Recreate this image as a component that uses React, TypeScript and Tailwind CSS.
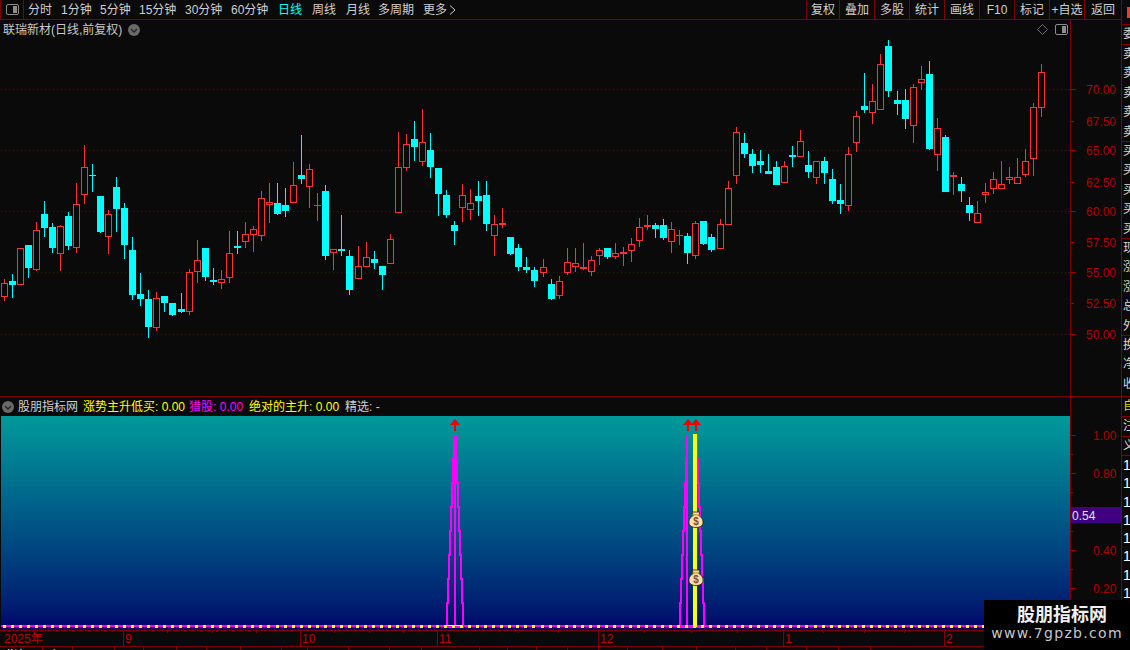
const UI_FONT = { fontFamily: '"Liberation Sans","Noto Sans CJK SC",sans-serif' };

// [kind, centreX, wickTop, bodyTop, bodyBottom, wickBottom] measured off the chart, 3x units per segment
type Raw = [string, number, number, number, number, number];

const segments: { x0: number; y0: number; items: Raw[] }[] = [
  {
    x0: 0,
    y0: 130,
    items: [
      ["r", 13, 447, 460, 502, 512], ["c", 37, 432, 453, 465, 503], ["r", 61, 355, 355, 466, 466], ["c", 85, 345, 345, 414, 443],
      ["r", 109, 277, 301, 421, 422], ["c", 133, 213, 252, 294, 320], ["c", 157, 279, 291, 354, 368], ["r", 181, 285, 289, 373, 422],
      ["c", 205, 247, 258, 348, 360], ["r", 229, 160, 223, 355, 368], ["r", 253, 45, 112, 196, 221], ["c", 277, 102, 135, 138, 185],
      ["c", 301, 198, 198, 306, 309], ["r", 325, 240, 253, 322, 371], ["c", 349, 141, 171, 237, 305], ["c", 373, 220, 234, 345, 386],
      ["c", 397, 321, 360, 495, 509], ["c", 421, 429, 492, 507, 527], ["c", 445, 480, 507, 591, 623], ["r", 469, 487, 505, 593, 602],
      ["c", 493, 498, 498, 519, 545], ["c", 517, 519, 519, 555, 557], ["c", 544, 489, 537, 546, 548], ["r", 568, 418, 427, 547, 554],
      ["r", 592, 331, 391, 427, 458], ["c", 616, 354, 354, 441, 452], ["c", 640, 414, 450, 456, 464], ["r", 664, 420, 448, 460, 476],
      ["r", 688, 303, 370, 445, 458], ["c", 712, 303, 348, 354, 371], ["r", 736, 276, 313, 337, 353], ["r", 760, 289, 298, 314, 365],
      ["r", 784, 183, 205, 319, 332], ["r", 808, 160, 217, 226, 278],
    ],
  },
  {
    x0: 270,
    y0: 100,
    items: [
      ["c", 22, 250, 309, 342, 345], ["c", 46, 264, 315, 333, 350], ["r", 70, 186, 256, 308, 308], ["c", 94, 105, 225, 237, 252],
      ["r", 118, 192, 208, 262, 324], ["R", 142, 279, 315, 318, 362], ["c", 166, 255, 273, 468, 480], ["r", 190, 448, 448, 458, 510],
      ["c", 214, 345, 447, 453, 468], ["c", 238, 450, 468, 570, 585], ["r", 265, 438, 499, 536, 536], ["r", 289, 426, 472, 500, 500],
      ["c", 313, 453, 477, 489, 507], ["c", 337, 498, 498, 525, 570], ["r", 361, 402, 418, 491, 491], ["r", 385, 96, 202, 338, 338],
      ["r", 409, 102, 133, 203, 212], ["c", 433, 63, 117, 141, 183], ["r", 457, 27, 127, 185, 197], ["c", 481, 99, 150, 201, 234],
      ["c", 505, 204, 204, 282, 347], ["c", 529, 270, 285, 345, 353], ["c", 553, 363, 375, 393, 435], ["r", 577, 252, 286, 323, 365],
      ["r", 601, 267, 310, 329, 359], ["c", 625, 243, 288, 303, 347], ["c", 649, 243, 285, 372, 392], ["r", 673, 345, 373, 407, 467],
      ["r", 697, 324, 370, 376, 383], ["c", 721, 411, 411, 462, 465], ["c", 745, 432, 444, 501, 513], ["c", 769, 471, 501, 510, 519],
      ["c", 793, 501, 510, 543, 560],
    ],
  },
  {
    x0: 540,
    y0: 120,
    items: [
      ["r", 10, 417, 442, 458, 470], ["c", 34, 477, 492, 537, 540], ["r", 58, 468, 484, 527, 537], ["r", 82, 384, 427, 458, 465],
      ["r", 106, 384, 430, 440, 456], ["R", 130, 369, 442, 447, 450], ["r", 154, 408, 421, 455, 468], ["r", 178, 384, 391, 407, 435],
      ["c", 202, 384, 384, 411, 417], ["r", 226, 369, 400, 410, 417], ["R", 250, 381, 397, 402, 438], ["r", 274, 354, 373, 392, 426],
      ["r", 298, 294, 322, 362, 381], ["R", 322, 285, 316, 321, 330], ["c", 346, 309, 315, 327, 354], ["c", 370, 297, 315, 354, 360],
      ["r", 394, 306, 328, 365, 399], ["R", 418, 330, 345, 348, 375], ["c", 442, 339, 348, 399, 432], ["r", 466, 303, 310, 407, 417],
      ["c", 490, 303, 303, 372, 375], ["c", 514, 342, 351, 390, 396], ["r", 541, 297, 313, 386, 387], ["r", 565, 183, 205, 314, 315],
      ["r", 589, 21, 37, 167, 192], ["c", 613, 39, 69, 102, 114], ["c", 637, 87, 102, 138, 159], ["c", 661, 90, 123, 135, 159],
      ["c", 685, 102, 153, 162, 162], ["c", 709, 123, 141, 195, 195], ["r", 733, 123, 139, 188, 189], ["c", 757, 78, 105, 111, 141],
      ["r", 781, 30, 64, 110, 111],
    ],
  },
  {
    x0: 800,
    y0: 30,
    items: [
      ["c", 25, 363, 405, 426, 444], ["r", 49, 393, 394, 445, 462], ["c", 73, 381, 393, 429, 462], ["c", 97, 417, 447, 513, 522],
      ["c", 121, 462, 510, 522, 552], ["r", 145, 351, 373, 529, 543], ["r", 169, 243, 259, 338, 366], ["c", 193, 129, 228, 240, 249],
      ["r", 217, 162, 214, 250, 282], ["r", 241, 72, 103, 239, 240], ["c", 265, 30, 48, 183, 201], ["c", 292, 183, 210, 222, 255],
      ["c", 316, 177, 210, 267, 297], ["r", 340, 162, 172, 287, 339], ["r", 364, 108, 148, 158, 180], ["c", 388, 93, 132, 357, 360],
      ["r", 412, 264, 295, 374, 423], ["c", 436, 315, 321, 486, 486], ["R", 460, 426, 436, 441, 495], ["c", 484, 441, 462, 483, 516],
      ["c", 508, 501, 525, 549, 573], ["r", 532, 513, 550, 578, 579], ["r", 556, 459, 487, 494, 519], ["r", 580, 426, 448, 476, 492],
      ["r", 604, 393, 463, 476, 477], ["r", 628, 411, 442, 450, 462], ["r", 652, 384, 442, 461, 461], ["r", 676, 357, 394, 434, 441],
      ["r", 700, 219, 232, 388, 438], ["r", 724, 102, 127, 233, 261],
    ],
  },
];

function PanelIcon({ color = "#8c8c8c" }: { color?: string }) {
  return (
    <svg width="13" height="11" viewBox="0 0 13 11">
      <rect x="0.5" y="0.5" width="12" height="10" rx="1.5" fill="none" stroke={color} />
      <rect x="7" y="2" width="4" height="7" fill={color} />
    </svg>
  );
}

function ChevronBadge() {
  return (
    <svg width="12" height="12" viewBox="0 0 12 12">
      <circle cx="6" cy="6" r="6" fill="#6a6a6a" />
      <path d="M3 5 L6 8 L9 5" fill="none" stroke="#222" strokeWidth="1.3" />
    </svg>
  );
}

function CandleChart() {
  const red = "#ff3333";
  const cyan = "#00ffff";
  return (
    <svg width="1070" height="376" viewBox="0 20 1070 376" shapeRendering="crispEdges" className="block">
      {[89, 150, 211, 272, 334].map((y) => (
        <line key={y} x1="1" x2="1070" y1={y + 0.5} y2={y + 0.5} stroke="#6a0000" strokeDasharray="1 3" />
      ))}
      {segments.map((seg) =>
        seg.items.map(([kind, cx, hi, top, bot, lo]) => {
          const x = seg.x0 + Math.floor(cx / 3);
          const yHi = seg.y0 + Math.round(hi / 3);
          const yTop = seg.y0 + Math.round(top / 3);
          const yBot = seg.y0 + Math.round(bot / 3);
          const yLo = seg.y0 + Math.round(lo / 3);
          const color = kind === "c" ? cyan : red;
          return (
            <g key={`${seg.x0}-${cx}`}>
              <rect x={x} y={yHi} width="1" height={yLo - yHi} fill={color} />
              {kind === "r" ? (
                <rect x={x - 2.5} y={yTop + 0.5} width="6" height={yBot - yTop - 1} fill="#0a0a0a" stroke={color} />
              ) : (
                <rect x={x - 3} y={yTop} width="7" height={Math.max(yBot - yTop, 1)} fill={color} />
              )}
            </g>
          );
        }),
      )}
    </svg>
  );
}

function PriceAxis() {
  const labels = ["70.00", "67.50", "65.00", "62.50", "60.00", "57.50", "55.00", "52.50", "50.00"];
  const ys = [89, 121, 150, 182, 211, 242, 272, 303, 334];
  return (
    <svg width="50" height="376" viewBox="0 20 50 376" className="block" style={UI_FONT}>
      {labels.map((label, i) => (
        <g key={label}>
          <rect x="0" y={ys[i]} width={i % 2 === 0 ? 5 : 3} height="1" fill="#a00000" />
          <text x="15" y={ys[i] + 5} fontSize="12" fill="#b00000">
            {label}
          </text>
        </g>
      ))}
    </svg>
  );
}

function MoneyBag({ x, y }: { x: number; y: number }) {
  return (
    <g transform={`translate(${x} ${y})`}>
      <path d="M3 0 H11 L9.5 3.5 C13 5 14 8 14 10.5 C14 14 11 15.5 7 15.5 C3 15.5 0 14 0 10.5 C0 8 1 5 4.5 3.5 Z" fill="#f7dfa6" stroke="#241a08" strokeWidth="0.8" />
      <rect x="3.5" y="2.2" width="7" height="1.4" fill="#d9a520" />
      <text x="7" y="13" textAnchor="middle" fontSize="10" fontWeight="700" fill="#8a4a30" fontFamily="Liberation Sans, sans-serif">
        $
      </text>
    </g>
  );
}

function Arrow({ x }: { x: number }) {
  return <path d={`M${x} 419 L${x + 5} 425 H${x + 1} V431 H${x - 1} V425 H${x - 5} Z`} fill="#f00000" />;
}

// stepped envelope of the signal, widening by one pixel every 24 px on the way down
function stepped(cx: number, topHalf: number) {
  const left: string[] = [];
  const right: string[] = [];
  for (let k = 0; k < 8; k++) {
    const y = 435 + k * 24;
    left.push(`${cx - topHalf - k},${y} ${cx - topHalf - k},${y + 24}`);
    right.unshift(`${cx + topHalf + k},${y + 24} ${cx + topHalf + k},${y}`);
  }
  return [...left, ...right].join(" ");
}

function SignalChart() {
  const dashes = Array.from({ length: 133 }, (_, i) => Math.floor(3 + 8.03 * i));
  return (
    <svg
      width="1069"
      height="214"
      viewBox="1 416 1069 214"
      className="block ml-[1px] bg-linear-to-b from-[#009a9a] to-[#00006a]"
    >
      <g fill="none" stroke="#ff00ff" strokeWidth="2" shapeRendering="crispEdges">
        <polyline points={stepped(455, 1)} />
        <line x1="455" x2="455" y1="435" y2="627" />
        <polyline points={stepped(692, 5)} />
        <line x1="687" x2="687" y1="435" y2="627" />
      </g>
      <rect x="1" y="625" width="1069" height="2" fill="#ff00ff" shapeRendering="crispEdges" />
      {dashes.map((x) => (
        <rect key={x} x={x} y="625" width="3" height="3" fill="#ffff00" shapeRendering="crispEdges" />
      ))}
      <rect x="447" y="625" width="16" height="1" fill="#ffff00" shapeRendering="crispEdges" />
      <rect x="693" y="434" width="4" height="193" fill="#ffff00" shapeRendering="crispEdges" />
      <Arrow x={455} />
      <Arrow x={688} />
      <Arrow x={696} />
      <MoneyBag x={689} y={512} />
      <MoneyBag x={689} y={570} />
    </svg>
  );
}

function SignalAxis() {
  const ticks: [number, boolean][] = [
    [435, true], [454, false], [473, true], [492, false], [531, false], [550, true], [569, false], [588, true], [607, false],
  ];
  const labels: [string, number][] = [["1.00", 435], ["0.80", 473], ["0.40", 550], ["0.20", 588]];
  return (
    <svg width="50" height="233" viewBox="0 397 50 233" className="block" style={UI_FONT}>
      {ticks.map(([y, long]) => (
        <rect key={y} x="0" y={y} width={long ? 5 : 2} height="1" fill="#a00000" />
      ))}
      {labels.map(([label, y]) => (
        <text key={label} x="22" y={y + 5} fontSize="12" fill="#b00000">
          {label}
        </text>
      ))}
      <rect x="0" y="507" width="50" height="16" fill="#400080" />
      <text x="1" y="520" fontSize="12" fill="#e0e0e0">
        0.54
      </text>
    </svg>
  );
}

function TimeAxis() {
  const majors: [string, number][] = [["9", 123], ["10", 300], ["11", 437], ["12", 598], ["1", 783], ["2", 944]];
  const minors = [167, 212, 256, 334, 369, 403, 518, 558, 644, 691, 737, 823, 864, 904];
  return (
    <svg width="1070" height="15" viewBox="0 631 1070 15" className="block" style={UI_FONT}>
      <text x="4" y="643" fontSize="12" fill="#c00000">
        2025年
      </text>
      {majors.map(([label, x]) => (
        <g key={label}>
          <rect x={x} y="631" width="1" height="15" fill="#800000" />
          <text x={x + 2} y="643" fontSize="12" fill="#c00000">
            {label}
          </text>
        </g>
      ))}
      {minors.map((x) => (
        <rect key={x} x={x} y="631" width="1" height="2" fill="#800000" />
      ))}
    </svg>
  );
}

const periods: [string, number][] = [
  ["分时", 33], ["1分钟", 39], ["5分钟", 39], ["15分钟", 46], ["30分钟", 46], ["60分钟", 47],
  ["日线", 34], ["周线", 34], ["月线", 32], ["多周期", 45],
];
const tools: [string, number][] = [
  ["复权", 33], ["叠加", 35], ["多股", 35], ["统计", 35], ["画线", 35], ["F10", 35], ["标记", 35], ["+自选", 35], ["返回", 37],
];
const tabWidths = [43, 30, 42, 29, 33, 30, 34, 41, 26, 41, 41, 32, 58, 28, 29, 31, 31, 29, 35, 34, 39, 31, 40, 32, 32];

function SideGroup({ chars, height, color }: { chars: string[]; height: string; color?: string }) {
  return (
    <div className={`flex flex-col border-b border-[#800000] overflow-hidden ${height}`}>
      {chars.map((c, i) => (
        <div key={i} className="h-[19.4px] leading-[19.4px] pl-[1px] whitespace-nowrap" style={{ color }}>
          {c}
        </div>
      ))}
    </div>
  );
}

export default function App() {
  return (
    <div className="relative flex w-[1130px] h-[650px] overflow-hidden bg-[#0a0a0a] text-[12px] text-[#d0d0d0]" style={UI_FONT}>
      <div className="flex flex-col w-[1122px] shrink-0 border-r border-[#800000]">
        {/* toolbar */}
        <div className="flex items-center h-[20px] shrink-0 border-b border-[#800000]">
          <div className="flex items-center justify-center w-[24px] h-full border-x border-[#800000]">
            <PanelIcon />
          </div>
          <div className="flex items-center pl-[4px] flex-1 whitespace-nowrap">
            {periods.map(([p, w]) => (
              <span key={p} className={p === "日线" ? "text-[#00ffff]" : ""} style={{ width: w }}>
                {p}
              </span>
            ))}
            <span className="flex items-center gap-[2px]">
              更多
              <svg width="7" height="10" viewBox="0 0 7 10">
                <path d="M1 0.5 L6 5 L1 9.5" fill="none" stroke="#d0d0d0" />
              </svg>
            </span>
          </div>
          <div className="flex h-full">
            {tools.map(([t, w]) => (
              <div key={t} className="flex items-center justify-center h-full border-l border-[#800000]" style={{ width: w }}>
                {t}
              </div>
            ))}
          </div>
        </div>

        {/* price panel */}
        <div className="flex h-[377px] shrink-0 border-b border-[#800000]">
          <div className="relative w-[1070px] shrink-0">
            <CandleChart />
            <div className="absolute left-[3px] top-[1px] flex items-center gap-[6px] h-[18px] text-[#c8c8c8]">
              联瑞新材(日线,前复权)
              <ChevronBadge />
            </div>
            <div className="absolute right-[2px] top-[4px] flex items-center gap-[7px]">
              <svg width="11" height="11" viewBox="0 0 11 11">
                <path d="M5.5 0.5 L10.5 5.5 L5.5 10.5 L0.5 5.5 Z" fill="none" stroke="#6e6e6e" />
              </svg>
              <PanelIcon color="#8c8c8c" />
            </div>
          </div>
          <div className="w-[51px] border-l border-[#800000]">
            <PriceAxis />
          </div>
        </div>

        {/* signal panel */}
        <div className="flex h-[233px] shrink-0">
          <div className="flex flex-col w-[1070px] shrink-0">
            <div className="flex items-center h-[19px] shrink-0 pl-[2px] whitespace-nowrap">
              <ChevronBadge />
              <span className="ml-[4px]">股朋指标网</span>
              <span className="ml-[5px] text-[#ffff00]">涨势主升低买: 0.00</span>
              <span className="ml-[4px] text-[#ff00ff]">猎股: 0.00</span>
              <span className="ml-[6px] text-[#ffff00]">绝对的主升: 0.00</span>
              <span className="ml-[6px]">精选: -</span>
            </div>
            <SignalChart />
          </div>
          <div className="w-[51px] border-l border-[#800000]">
            <SignalAxis />
          </div>
        </div>

        {/* time axis */}
        <div className="h-[17px] shrink-0 border-y border-[#800000]">
          <TimeAxis />
        </div>

        {/* tab row, only the top pixels fit in the window */}
        <div className="flex h-[3px] overflow-hidden">
          {tabWidths.map((w, i) => (
            <div key={i} className="h-[14px] pl-[6px] border-r border-[#800000] leading-[18px] text-white whitespace-nowrap" style={{ width: w }}>
              {i === 0 ? "指标" : i === 1 ? "主" : ""}
            </div>
          ))}
        </div>
      </div>

      {/* quote column, cut off by the window edge */}
      <div className="flex flex-col flex-1 overflow-hidden text-[#d8d8d8]">
        <div className="flex items-start h-[25px] border-b border-[#800000] shrink-0">
          <div className="ml-auto mt-[7px] w-[3px] h-[11px] bg-[#e04030]" />
        </div>
        <SideGroup chars={["委比"]} height="h-[20px] shrink-0" />
        <SideGroup chars={["卖五", "卖四", "卖三", "卖二", "卖一"]} height="h-[97px] shrink-0" />
        <SideGroup chars={["买一", "买二", "买三", "买四", "买五"]} height="h-[97px] shrink-0" />
        <SideGroup chars={["现价", "涨跌", "涨幅", "总手", "外盘"]} height="h-[97px] shrink-0" />
        <SideGroup chars={["换手", "净资", "收益"]} height="h-[61px] shrink-0" />
        <SideGroup chars={["自选"]} height="h-[20px] shrink-0" color="#d8d800" />
        <SideGroup chars={["注册"]} height="h-[20px] shrink-0" />
        <SideGroup chars={["义务"]} height="h-[19px] shrink-0" />
        <div className="flex flex-col text-white">
          {["14", "13", "12", "11", "10", "16", "15", "17", "18"].map((n, i) => (
            <div key={i} className="h-[18.3px] leading-[18.3px] pl-[1px] text-[14px]">
              {n}
            </div>
          ))}
        </div>
      </div>

      {/* watermark */}
      <div className="absolute right-0 bottom-0 flex flex-col items-center w-[146px] h-[50px] bg-black pt-[2px]">
        <div className="ml-[10px] text-[18px] leading-[22px] font-bold text-[#f0f0f0]" style={{ fontFamily: '"Noto Sans CJK SC",sans-serif' }}>
          股朋指标网
        </div>
        <div className="text-[14px] leading-[18px] tracking-[1.3px] text-[#c8c8c8]" style={{ fontFamily: '"DejaVu Sans",sans-serif' }}>
          www.7gpzb.com
        </div>
      </div>
    </div>
  );
}
